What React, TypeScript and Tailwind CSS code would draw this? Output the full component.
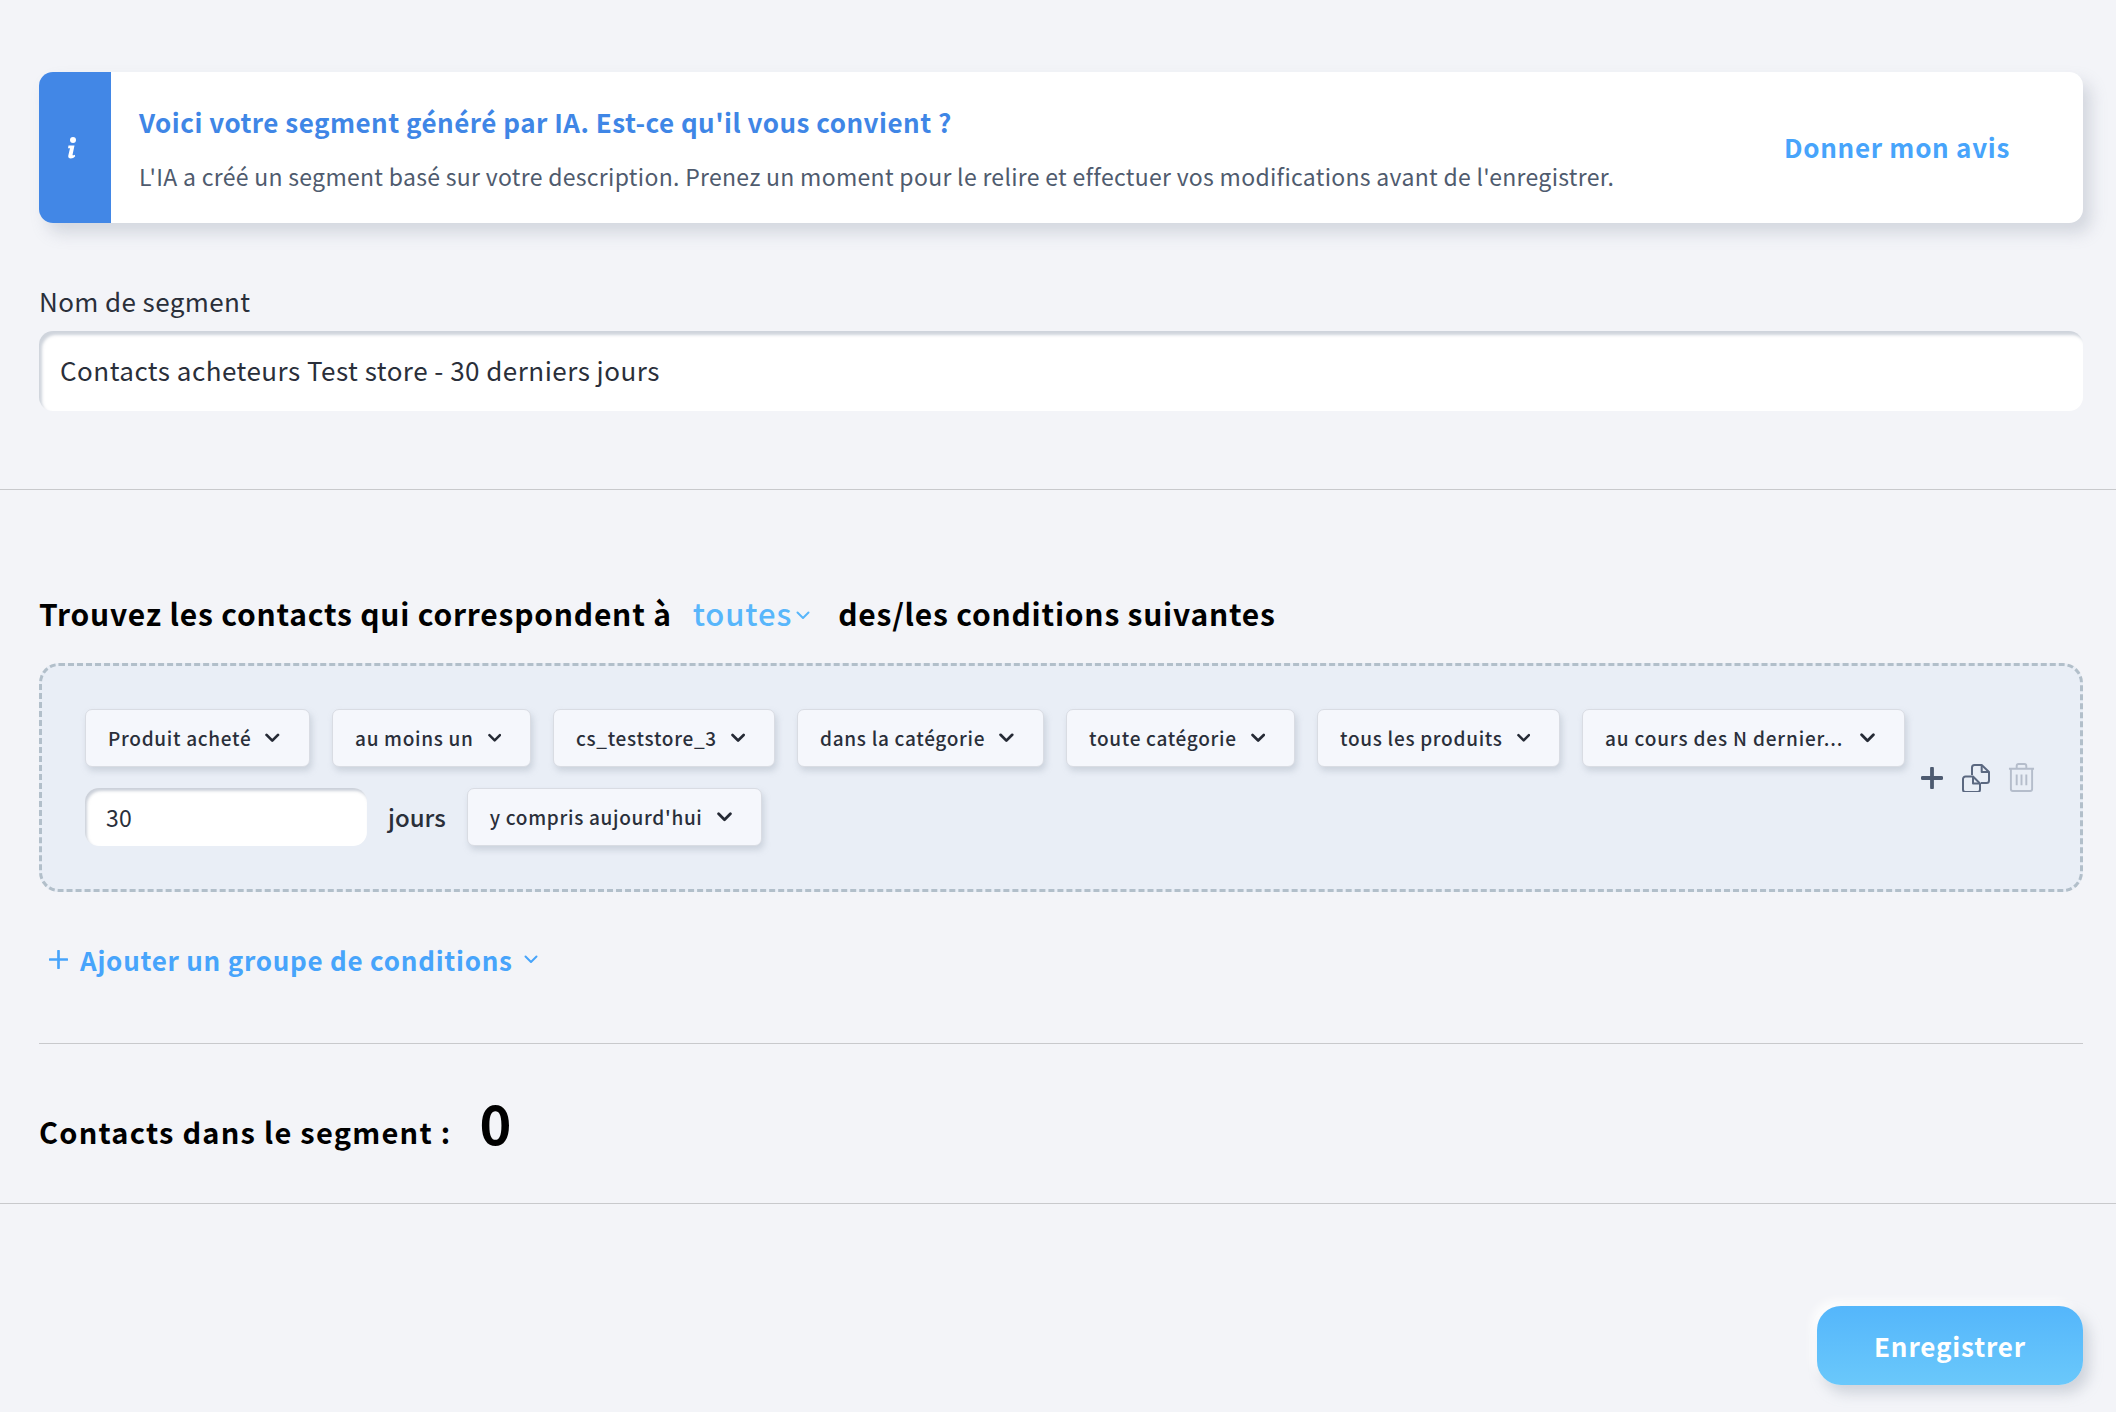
import React from "react";

const font = { fontFamily: '"Noto Sans CJK JP", "Noto Sans", sans-serif' };

function Chevron({ className, weight = 2.6 }: { className?: string; weight?: number }) {
  return (
    <svg viewBox="0 0 14 9" fill="none" className={className}>
      <path d="M1.5 1.5 7 7l5.5-5.5" stroke="currentColor" strokeWidth={weight} strokeLinecap="round" strokeLinejoin="round" />
    </svg>
  );
}

function Chip({ label, className = "" }: { label: string; className?: string }) {
  return (
    <button className={"h-[58px] pl-[22px] pr-[29px] flex items-center justify-between gap-[14px] rounded-[7px] border border-[#d9dce3] bg-[#f5f7fc] text-[19px] font-medium tracking-[0.7px] text-[#2a2f3a] shadow-[2px_4px_6px_rgba(150,160,175,0.35)] whitespace-nowrap " + className}>
      {label}
      <Chevron className="w-[15px] h-[10px] text-[#252a35]" />
    </button>
  );
}

export default function App() {
  return (
    <div className="min-h-[1412px] bg-[#f3f4f8] pt-[72px] relative overflow-hidden" style={font}>
      {/* Banner */}
      <div className="ml-[39px] mr-[33px] h-[151px] flex rounded-[14px] bg-white shadow-[8px_10px_16px_rgba(140,150,165,0.3)]">
        <div className="w-[72px] shrink-0 rounded-l-[14px] bg-[#4287e6] flex items-center justify-center">
          <svg viewBox="0 0 10 22" className="w-[10px] h-[22px] -ml-[7px]" fill="white">
            <circle cx="6" cy="3" r="3" />
            <path d="M1.5 8.5h6l-1.9 9c-.2.8.5 1 1.2.7l1-.5.4 1.6c-1.3 1.4-2.8 2.2-4.4 2.2-1.9 0-2.9-1.2-2.5-3L3 11.2H1z" />
          </svg>
        </div>
        <div className="flex-1 pl-[28px] pr-[73px] flex items-center justify-between">
          <div>
            <div className="text-[26px] leading-[36px] font-bold tracking-[0.48px] text-[#3f86e6]">Voici votre segment généré par IA. Est-ce qu'il vous convient ?</div>
            <div className="mt-[20px] text-[23px] leading-[32px] tracking-[0.3px] text-[#4f5b6e]">L'IA a créé un segment basé sur votre description. Prenez un moment pour le relire et effectuer vos modifications avant de l'enregistrer.</div>
          </div>
          <button className="pb-[2px] text-[26px] font-bold tracking-[0.7px] text-[#47a4fb] whitespace-nowrap">Donner mon avis</button>
        </div>
      </div>

      {/* Nom */}
      <div className="ml-[39px] mr-[33px] mt-[60px]">
        <label className="block text-[26px] leading-[36px] tracking-[0.4px] text-[#2a2f3a]">Nom de segment</label>
        <div className="mt-[12px] h-[80px] flex items-center pl-[21px] pb-[3px] rounded-[14px] bg-white shadow-[inset_3px_4px_3px_rgba(160,170,185,0.5)] text-[26px] tracking-[0.48px] text-[#2a2f3a]">
          Contacts acheteurs Test store - 30 derniers jours
        </div>
      </div>
      <div className="mt-[78px] h-px bg-[#c8c9cc]" />

      {/* Conditions */}
      <div className="ml-[39px] mr-[33px] mt-[103px]">
        <div className="flex items-center h-[40px] text-[30px] font-bold tracking-[0.78px] text-black">
          <span>Trouvez les contacts qui correspondent à</span>
          <span className="ml-[21px] text-[31px] font-medium tracking-[0.9px] text-[#58b6fb]">toutes</span>
          <Chevron className="ml-[4px] mt-[4px] w-[14px] h-[9px] text-[#58b6fb]" weight={2} />
          <span className="ml-[28px]">des/les conditions suivantes</span>
        </div>

        <div className="mt-[30px] h-[229px] rounded-[20px] border-[3px] border-dashed border-[#b2bfca] bg-[#e9eef6] pl-[43px] pr-[44px] flex items-center justify-between">
          <div className="w-[1825px] flex flex-wrap items-center gap-x-[22px] gap-y-[21px]">
            <Chip label="Produit acheté" className="w-[225px]" />
            <Chip label="au moins un" className="w-[199px]" />
            <Chip label="cs_teststore_3" className="w-[222px]" />
            <Chip label="dans la catégorie" className="w-[247px]" />
            <Chip label="toute catégorie" className="w-[229px]" />
            <Chip label="tous les produits" className="w-[243px]" />
            <Chip label="au cours des N dernier..." className="w-[323px] tracking-[0.85px]" />
            <div className="w-[282px] h-[58px] flex items-center pl-[21px] rounded-[14px] bg-white shadow-[inset_2px_3px_3px_rgba(160,170,185,0.55)] text-[23px] tracking-[0.3px] text-[#2a2f3a]">30</div>
            <span className="-mx-px text-[24px] font-medium text-[#2a2f3a]">jours</span>
            <Chip label="y compris aujourd'hui" className="w-[295px]" />
          </div>
          <div className="flex items-center gap-[19px]">
            <svg viewBox="0 0 22 22" className="w-[22px] h-[22px]" fill="none">
              <path d="M11 1.5v19M1.5 11h19" stroke="#4d5a70" strokeWidth="3.8" strokeLinecap="round" />
            </svg>
            <svg viewBox="0 0 28 28" className="w-[28px] h-[28px]" fill="none" stroke="#5b6880" strokeWidth="2" strokeLinejoin="round">
              <path d="M10 11V3.5A2.5 2.5 0 0 1 12.5 1h7.2L27 8v8.5a2.5 2.5 0 0 1-2.5 2.5H19" />
              <path d="M19.7 1v7H27" />
              <path d="M1 15a2.5 2.5 0 0 1 2.5-2.5H11l7 7v6a2.5 2.5 0 0 1-2.5 2.5h-12A2.5 2.5 0 0 1 1 25.5z" />
              <path d="M11 12.5v7h7" />
            </svg>
            <svg viewBox="0 0 28 30" className="w-[27px] h-[29px] -ml-[1px] mr-[1px]" fill="none" stroke="#b5bdcb" strokeWidth="2" strokeLinejoin="round">
              <path d="M1 6h26M9 6V3a2 2 0 0 1 2-2h6a2 2 0 0 1 2 2v3" />
              <path d="M3 6v21a2 2 0 0 0 2 2h18a2 2 0 0 0 2-2V6" />
              <path d="M9 12v11M14 12v11M19 12v11" />
            </svg>
          </div>
        </div>

        <button className="mt-[47px] ml-[10px] flex items-center h-[40px] text-[26px] font-bold tracking-[0.75px] text-[#47a4fb]">
          <svg viewBox="0 0 20 20" className="w-[19px] h-[19px] mr-[12px]" fill="none">
            <path d="M10 1v18M1 10h18" stroke="currentColor" strokeWidth="2.8" strokeLinecap="round" />
          </svg>
          Ajouter un groupe de conditions
          <Chevron className="ml-[11px] w-[14px] h-[9px]" weight={2} />
        </button>

        <div className="mt-[64px] h-px bg-[#c8c9cc]" />

        <div className="mt-[42px] h-[68px] flex items-end">
          <span className="mb-[1px] text-[29px] leading-[44px] font-bold tracking-[1.25px] text-black">Contacts dans le segment :</span>
          <span className="ml-[28px] text-[54px] leading-[64px] font-bold text-black">0</span>
        </div>
      </div>
      <div className="mt-[49px] h-px bg-[#c8c9cc]" />

      <div className="mt-[102px] mr-[33px] flex justify-end">
        <button className="w-[266px] h-[79px] rounded-[24px] bg-gradient-to-b from-[#54b6fb] to-[#6ac8fb] text-[26px] font-bold tracking-[0.85px] text-white shadow-[6px_8px_14px_rgba(150,160,175,0.4),-5px_-5px_10px_rgba(255,255,255,0.9)]">
          Enregistrer
        </button>
      </div>
    </div>
  );
}
